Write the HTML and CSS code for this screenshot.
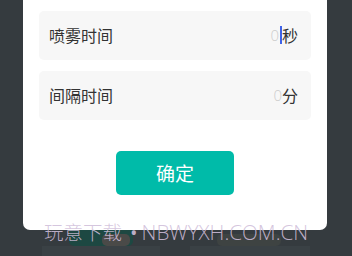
FILE: index.html
```html
<!DOCTYPE html>
<html>
<head>
<meta charset="utf-8">
<link rel="stylesheet" href="styles.css">
</head>
<body>
<div class="backdrop">
  <div class="bg-panel bg-left"></div>
  <div class="bg-panel bg-right"></div>
  <div class="bg-pill bg-green"><span class="bg-grey"></span></div>
  <div class="bg-pill bg-grey2"></div>
</div>
<div class="card">
  <div class="row">
    <span class="label">喷雾时间</span>
    <span class="value"><span class="zero">0</span><span class="cursor"></span><span class="unit">秒</span></span>
  </div>
  <div class="row">
    <span class="label">间隔时间</span>
    <span class="value"><span class="zero">0</span><span class="unit">分</span></span>
  </div>
  <div class="actions">
    <button class="btn">确定</button>
  </div>
</div>
<div class="watermark"><span class="wm-cn">玩意下载</span><span class="wm-dot">•</span><span class="wm-en">NBWYXH.COM.CN</span></div>
</body>
</html>
```
FILE: styles.css
```css
html, body {
  margin: 0;
  padding: 0;
}
body {
  width: 352px;
  height: 256px;
  overflow: hidden;
  background: #353b3f;
  font-family: "Noto Sans CJK SC", "Noto Sans", sans-serif;
  position: relative;
}
.backdrop {
  position: absolute;
  left: 0;
  top: 0;
  width: 352px;
  height: 256px;
}
.bg-panel {
  position: absolute;
  top: 246px;
  height: 20px;
  background: #3a4145;
}
.bg-left { left: 42px; width: 118px; }
.bg-right { left: 190px; width: 120px; }
.bg-pill {
  position: absolute;
  border-radius: 5px;
}
.bg-green {
  left: 69px;
  top: 222px;
  width: 64px;
  height: 24px;
  background: #1d4842;
}
.bg-grey {
  position: absolute;
  left: 33px;
  top: 12px;
  width: 28px;
  height: 12px;
  border-radius: 5px;
  background: #4a4a48;
}
.bg-grey2 {
  left: 217px;
  top: 234px;
  width: 64px;
  height: 12px;
  background: #3e4342;
}
.card {
  position: relative;
  margin: 0 25px 0 23px;
  width: 304px;
  box-sizing: border-box;
  background: #ffffff;
  border-radius: 0 0 7px 7px;
  padding: 11px 16px 35px;
  display: flex;
  flex-direction: column;
  gap: 11px;
}
.row {
  height: 49px;
  background: #f7f7f7;
  border-radius: 5px;
  display: flex;
  align-items: center;
  justify-content: space-between;
  padding: 0 13px 2px 10px;
  box-sizing: border-box;
}
.label {
  font-size: 16px;
  color: #333333;
}
.value {
  display: flex;
  align-items: center;
  font-size: 16px;
}
.zero {
  color: #cccccc;
  font-family: "Open Sans", sans-serif;
  font-weight: 300;
  font-size: 15px;
}
.cursor {
  width: 2px;
  height: 18px;
  background: #3f63e8;
  margin: 0 0 0 1px;
}
.unit {
  color: #333333;
}
.actions {
  display: flex;
  justify-content: center;
  margin-top: 20px;
}
.btn {
  width: 118px;
  height: 44px;
  border: none;
  border-radius: 5px;
  background: #00bba9;
  color: #ffffff;
  font-family: "Noto Sans CJK SC", "Noto Sans", sans-serif;
  font-size: 19px;
  padding: 0 0 2px;
}
.watermark {
  position: absolute;
  left: 44px;
  top: 217px;
  display: flex;
  align-items: baseline;
  color: rgba(208, 190, 218, 0.88);
  white-space: nowrap;
  line-height: 30px;
}
.wm-cn {
  font-size: 19.5px;
  font-weight: 300;
}
.wm-dot {
  font-family: "Open Sans", sans-serif;
  font-size: 20px;
  margin: 0 4px 0 8px;
}
.wm-en {
  font-family: "Open Sans", sans-serif;
  font-weight: 300;
  font-size: 20.6px;
  letter-spacing: 0;
}
```
